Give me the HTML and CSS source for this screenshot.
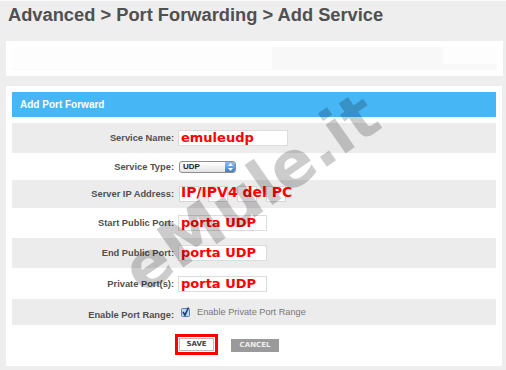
FILE: index.html
```html
<!DOCTYPE html>
<html lang="en">
<head>
    <meta charset="UTF-8">
    <title>Advanced - Port Forwarding - Add Service</title>
    <link rel="stylesheet" href="styles.css">
</head>
<body>
    <h1 class="page-title">Advanced &gt; Port Forwarding &gt; Add Service</h1>

    <div class="toolbar">
        <div class="toolbar-inner">
            <span class="toolbar-left"></span>
            <span class="toolbar-right"></span>
        </div>
    </div>

    <div class="panel">
        <div class="panel-head">Add Port Forward</div>

        <div class="form">
            <div class="row shaded">
                <span class="label">Service Name:</span>
                <div class="field"><span class="input input-name">emuleudp</span></div>
            </div>
            <div class="row row-type">
                <span class="label">Service Type:</span>
                <div class="field">
                    <span class="select">
                        <span class="select-text">UDP</span>
                        <span class="select-arrows">
                            <svg width="7" height="10" viewBox="0 0 7 10"><path d="M3.5 1 L6 4 L1 4 Z M3.5 9 L6 6 L1 6 Z" fill="#fff"/></svg>
                        </span>
                    </span>
                </div>
            </div>
            <div class="row shaded row-ip">
                <span class="label">Server IP Address:</span>
                <div class="field ip-field">
                    <span class="ip-box"></span>
                    <span class="ip-box"></span>
                    <span class="ip-box"></span>
                    <span class="ip-box"></span>
                    <span class="ip-note">IP/IPV4 del PC</span>
                </div>
            </div>
            <div class="row">
                <span class="label">Start Public Port:</span>
                <div class="field"><span class="input input-port">porta UDP</span></div>
            </div>
            <div class="row shaded">
                <span class="label">End Public Port:</span>
                <div class="field"><span class="input input-port">porta UDP</span></div>
            </div>
            <div class="row row-private">
                <span class="label">Private Port(s):</span>
                <div class="field"><span class="input input-port">porta UDP</span></div>
            </div>
            <div class="row shaded row-range">
                <span class="label label-low">Enable Port Range:</span>
                <div class="field check-field">
                    <svg class="checkbox" width="9" height="10" viewBox="0 0 9 10">
                        <rect x="0.5" y="1.5" width="8" height="8" rx="1" fill="#bcd6f2" stroke="#5c82b0"/>
                        <path d="M2 5 L4 8 L7.5 0.5" fill="none" stroke="#1c3c6c" stroke-width="1.6"/>
                    </svg>
                    <span class="check-text">Enable Private Port Range</span>
                </div>
            </div>
        </div>

        <div class="actions">
            <button class="btn btn-save">SAVE</button>
            <button class="btn btn-cancel">CANCEL</button>
        </div>

        <div class="watermark">eMule.it</div>
    </div>
</body>
</html>
```

FILE: styles.css
```css
* {
    margin: 0;
    padding: 0;
    box-sizing: border-box;
}

body {
    font-family: 'Liberation Sans', Arial, sans-serif;
    background: #eeeeee;
    border-top: 1px solid #fafafa;
    width: 506px;
    height: 370px;
    overflow: hidden;
}

.page-title {
    font-size: 18.3px;
    font-weight: bold;
    color: #505050;
    line-height: 22px;
    padding: 3px 0 0 8px;
}

.toolbar {
    margin: 15px 3px 0 6px;
    height: 35px;
    background: #fff;
    padding: 6px;
}

.toolbar-inner {
    height: 23px;
    background: #f8f8f8;
    display: flex;
    justify-content: space-between;
    align-items: flex-start;
}

.toolbar-left {
    width: 260px;
    height: 22px;
    background: #fdfdfd;
}

.toolbar-right {
    width: 54px;
    height: 17px;
    background: #fdfdfd;
}

.panel {
    position: relative;
    margin: 10px 4px 0 6px;
    background: #fff;
    padding: 6px 6px 6px;
    overflow: hidden;
}

.panel-head {
    height: 25px;
    background: #47b6f5;
    color: #fff;
    font-size: 10px;
    font-weight: bold;
    line-height: 25px;
    padding-left: 8px;
}

.form {
    margin-top: 6px;
}

.row {
    display: grid;
    grid-template-columns: 162px 1fr;
    column-gap: 4px;
    align-items: center;
    height: 30px;
}

.row.shaded {
    background: #ececec;
}

.row-type {
    height: 27px;
}

.row-ip {
    height: 28px;
}

.row-private {
    height: 31px;
}

.row-range {
    height: 26px;
}

.label {
    text-align: right;
    font-size: 9.3px;
    font-weight: bold;
    color: #505050;
}

.label-low {
    padding-top: 5px;
}

.field {
    display: flex;
    align-items: center;
}

.input {
    display: block;
    height: 16px;
    background: #fff;
    border: 1px solid #dcdcdc;
    font-family: 'DejaVu Sans', Verdana, sans-serif;
    font-weight: bold;
    font-size: 13px;
    line-height: 13px;
    color: #f00;
    padding-left: 2px;
    white-space: nowrap;
}

.input-name {
    width: 110px;
}

.input-port {
    width: 89px;
}

.select {
    display: flex;
    width: 57px;
    height: 12px;
    margin-left: 1px;
    border: 1px solid #8c8c8c;
    border-radius: 3px;
    background: linear-gradient(#ffffff, #e4e4e4);
    overflow: hidden;
}

.select-text {
    flex: 1;
    font-size: 8px;
    font-weight: bold;
    color: #222;
    line-height: 10px;
    padding-left: 3px;
}

.select-arrows {
    width: 10px;
    display: flex;
    align-items: center;
    justify-content: center;
    background: linear-gradient(#8cc0f0, #3a7fd6);
}

.ip-field {
    position: relative;
    gap: 9px;
    padding-left: 1px;
}

.ip-box {
    width: 20px;
    height: 16px;
    background: #fff;
    border: 1px solid #d6d6d6;
}

.ip-note {
    position: absolute;
    left: 3px;
    top: -2px;
    font-family: 'DejaVu Sans', Verdana, sans-serif;
    font-weight: bold;
    font-size: 14px;
    color: #f00;
    white-space: nowrap;
}

.check-field {
    gap: 7px;
    padding-left: 3px;
}

.check-text {
    font-size: 9.2px;
    color: #777;
}

.actions {
    display: flex;
    align-items: flex-start;
    gap: 17px;
    height: 35px;
    padding: 13px 0 0 167px;
}

.btn {
    height: 13px;
    font-family: 'DejaVu Sans', Verdana, sans-serif;
    font-size: 7px;
    font-weight: bold;
    line-height: 11px;
    border: 1px solid #bbb;
    cursor: pointer;
}

.btn-save {
    width: 35px;
    background: #fff;
    color: #444;
    outline: 3px solid #f00;
    outline-offset: 1px;
}

.btn-cancel {
    width: 48px;
    margin-top: 1px;
    background: #9a9a9a;
    border-color: #9a9a9a;
    color: #eee;
}

.watermark {
    position: absolute;
    left: 245px;
    top: 107px;
    transform: translate(-50%, -50%) rotate(-35deg);
    font-family: 'DejaVu Sans', Verdana, sans-serif;
    font-weight: bold;
    font-size: 64px;
    color: rgba(0, 0, 0, 0.2);
    white-space: nowrap;
    pointer-events: none;
}
```
